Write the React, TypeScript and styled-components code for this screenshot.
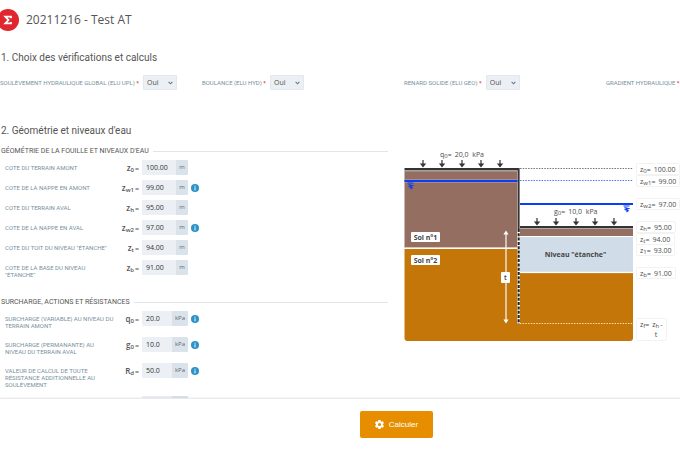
import React from "react";
import styled, { createGlobalStyle } from "styled-components";

const heading = `"Roboto", "Open Sans", sans-serif`;
const caps = `"Roboto", "Open Sans", sans-serif`;
const body = `"Open Sans", "Noto Sans", sans-serif`;

const Global = createGlobalStyle`
  * { box-sizing: border-box; }
  body { margin: 0; background: #fff; color: #555; font-family: ${body}; font-size: 7px; overflow: hidden; }
`;

const Page = styled.div`
  display: flex;
  flex-direction: column;
  height: 100vh;
  min-width: 792px;
`;

const Content = styled.main`
  flex: 1;
  min-height: 0;
  overflow: hidden;
  padding-top: 8px;
`;

const TitleBar = styled.header`
  display: flex;
  align-items: center;
  gap: 7px;
  height: 24px;
`;

const Logo = styled.svg`
  display: block;
  width: 19px;
  height: 24px;
`;

const Title = styled.h1`
  margin: 0;
  font: 400 12px/24px ${body};
`;

const SectionTitle = styled.h2`
  margin: 0;
  padding-left: 1px;
  font: 400 10px/16px ${heading};
`;

const Checks = styled.section`
  padding-top: 18px;
`;

const CheckGrid = styled.div`
  display: grid;
  grid-template-columns: repeat(4, 1fr);
  gap: 16px;
  padding: 9px 0 33px;
`;

const Check = styled.div`
  display: flex;
  align-items: center;
  gap: 4px;
  white-space: nowrap;
`;

const labelText = `
  color: #78909c;
  font-family: ${caps};
  font-size: 6px;
  line-height: 7px;
  text-transform: uppercase;
`;

const CheckLabel = styled.label`
  ${labelText}
`;

const Required = styled.span`
  color: #e53935;
  font-weight: 700;
`;

const SelectBox = styled.div`
  display: grid;
  width: 34px;
  height: 15px;
  border: 1px solid #e1e8ef;
  border-radius: 1px;
  background: #ecf0f5;
`;

const Select = styled.select`
  grid-area: 1 / 1;
  appearance: none;
  border: 0;
  padding: 0 3px;
  background: none;
  color: #4c4c4c;
  font: 400 7px/13px ${body};
`;

const Chevron = styled.svg`
  grid-area: 1 / 1;
  place-self: center end;
  width: 5px;
  height: 4px;
  margin-right: 3px;
  pointer-events: none;
`;

const Geometry = styled.div`
  display: grid;
  grid-template-columns: 1fr 1fr;
  gap: 16px;
  padding-top: 6px;
`;

const Forms = styled.div`
  display: flex;
  flex-direction: column;
  gap: 18px;
`;

const Group = styled.fieldset`
  margin: 0;
  border: 0;
  padding: 0;
  min-width: 0;
`;

const Legend = styled.legend`
  display: flex;
  align-items: center;
  gap: 4px;
  width: 100%;
  padding: 0 0 2px 1px;
  font-family: ${caps};
  font-size: 7px;
  line-height: 13px;
  text-transform: uppercase;

  &::after {
    content: "";
    flex: 1;
    height: 1px;
    background: #e1e5e9;
  }
`;

const Rows = styled.div<{ $gap: number }>`
  display: flex;
  flex-direction: column;
  gap: ${(p) => p.$gap}px;
  padding-left: 5px;
`;

const Row = styled.div`
  display: flex;
  align-items: flex-start;
`;

const RowLabel = styled.label`
  ${labelText}
  width: 110px;
  padding-top: 4px;
`;

const Symbol = styled.span`
  width: 24px;
  height: 15px;
  margin-right: 3px;
  text-align: right;
  font-size: 8px;
  font-weight: 600;
  line-height: 15px;
  white-space: nowrap;

  sub {
    font-size: 6px;
    line-height: 1;
    vertical-align: -1px;
  }
`;

const Equals = styled.span`
  margin-left: 1px;
  font-size: 7px;
`;

const Field = styled.div`
  display: flex;
  width: 46px;
  height: 15px;
  border-radius: 1px;
  overflow: hidden;
`;

const Input = styled.input`
  flex: 1;
  min-width: 0;
  border: 0;
  padding: 0 4px;
  background: #ecf0f5;
  color: #333;
  font: 400 7px/15px ${body};
`;

const Unit = styled.span<{ $wide: boolean }>`
  width: ${(p) => (p.$wide ? 16 : 12)}px;
  background: #dae3ec;
  color: #666;
  font-size: 6px;
  line-height: 15px;
  text-align: center;
`;

const InfoButton = styled.button`
  display: grid;
  place-items: center;
  width: 8px;
  height: 15px;
  margin-left: 3px;
  border: 0;
  padding: 0;
  background: none;
`;

const Diagram = styled.svg`
  display: block;
  width: 276px;
  height: 200px;
  font-family: ${body};
  font-size: 7px;
`;

const Footer = styled.footer`
  display: flex;
  justify-content: center;
  padding: 12px 0;
  border-top: 1px solid #e9e9e9;
  box-shadow: 0 -1px 2px #0000000c;
  background: #fff;
  z-index: 1;
`;

const Submit = styled.button`
  display: flex;
  align-items: center;
  justify-content: center;
  gap: 4px;
  width: 73px;
  height: 27px;
  border: 0;
  border-radius: 2px;
  padding: 0;
  background: #e68e00;
  color: #fff;
  font: 400 8px/12px "Liberation Sans", Arial, sans-serif;
`;

const checks = [
  { id: "upl", label: "Soulèvement hydraulique global (ELU UPL)" },
  { id: "hyd", label: "Boulance (ELU HYD)" },
  { id: "geo", label: "Renard solide (ELU GEO)" },
  { id: "gradient", label: "Gradient hydraulique" },
];

type Item = { label: string; symbol: string; sub: string; value: string; info?: boolean };

const levels: Item[] = [
  { label: "Cote du terrain amont", symbol: "z", sub: "0", value: "100.00" },
  { label: "Cote de la nappe en amont", symbol: "z", sub: "w1", value: "99.00", info: true },
  { label: "Cote du terrain aval", symbol: "z", sub: "h", value: "95.00" },
  { label: "Cote de la nappe en aval", symbol: "z", sub: "w2", value: "97.00", info: true },
  { label: 'Cote du toit du niveau "étanche"', symbol: "z", sub: "t", value: "94.00" },
  { label: 'Cote de la base du niveau "étanche"', symbol: "z", sub: "b", value: "91.00" },
];

const loads: Item[] = [
  { label: "Surcharge (variable) au niveau du terrain amont", symbol: "q", sub: "0", value: "20.0", info: true },
  { label: "Surcharge (permanante) au niveau du terrain aval", symbol: "g", sub: "0", value: "10.0", info: true },
  { label: "Valeur de calcul de toute résistance additionnelle au soulèvement", symbol: "R", sub: "d", value: "50.0", info: true },
  { label: "", symbol: "", sub: "", value: "" },
];

function FormGroup({ title, items, unit, gap }: { title: string; items: Item[]; unit: string; gap: number }) {
  return (
    <Group>
      <Legend>{title}</Legend>
      <Rows $gap={gap}>
        {items.map((item, i) => {
          const id = `${unit}-${i}`;
          return (
            <Row key={id}>
              <RowLabel htmlFor={id}>{item.label}</RowLabel>
              <Symbol>
                {item.symbol && (
                  <>
                    {item.symbol}
                    <sub>{item.sub}</sub>
                    <Equals>=</Equals>
                  </>
                )}
              </Symbol>
              <Field>
                <Input id={id} defaultValue={item.value} />
                <Unit $wide={unit === "kPa"}>{item.symbol && unit}</Unit>
              </Field>
              {item.info && (
                <InfoButton type="button" aria-label="Information">
                  <svg width="8" height="8" viewBox="0 0 8 8">
                    <circle cx="4" cy="4" r="4" fill="#2b93c7" />
                    <path d="M4 1.7v1M4 3.4v2.9" stroke="#fff" strokeWidth="1" />
                  </svg>
                </InfoButton>
              )}
            </Row>
          );
        })}
      </Rows>
    </Group>
  );
}

function DownArrow({ x, y }: { x: number; y: number }) {
  return <path d={`M${x} ${y}v5M${x - 2} ${y + 4}l2 2.5l2 -2.5z`} fill="#333" stroke="#333" strokeWidth="1.2" />;
}

function Water({ x, y }: { x: number; y: number }) {
  return <path d={`M${x - 3} ${y + 1}h6M${x - 2} ${y + 2.6}l4 1l-3 1.2l2.6 .9l-1.6 1.3`} fill="none" stroke="#0b3df5" strokeWidth="1.2" />;
}

function Quantity({ x, y, name, sub, value }: { x: number; y: number; name: string; sub: string; value: string }) {
  return (
    <text x={x} y={y} fill="#4c4c4c">
      {name}
      <tspan dy="1" fontSize="6">{sub}</tspan>
      <tspan dy="-1">=</tspan>
      <tspan dx="3">{value}</tspan>
    </text>
  );
}

const marks = [
  { y: 169, sub: "0", value: "100.00", width: 43 },
  { y: 181, sub: "w1", value: "99.00", width: 43 },
  { y: 204, sub: "w2", value: "97.00", width: 43 },
  { y: 227, sub: "h", value: "95.00", width: 39 },
  { y: 239, sub: "t", value: "94.00", width: 38 },
  { y: 250, sub: "1", value: "93.00", width: 38 },
  { y: 273, sub: "b", value: "91.00", width: 39 },
];

function Excavation() {
  return (
    <Diagram viewBox="404 145 276 200" role="img" aria-label="Coupe de la fouille">
      <Quantity x={440} y={157} name="q" sub="0" value={"20,0\u00a0\u00a0kPa"} />
      {[423, 442, 462, 481, 500].map((x) => <DownArrow key={x} x={x} y={160} />)}
      <rect x="404.5" y="171" width="113" height="77" fill="#956e62" />
      <path d="M404.5 249h114v92h-111a3 3 0 0 1 -3 -3z" fill="#c57608" />
      <rect x="404.5" y="168" width="114" height="2.5" fill="#333" />
      <rect x="404.5" y="170.5" width="113" height="1" fill="#aaa" />
      <rect x="404.5" y="247.4" width="113" height="1.3" fill="#fff" />
      <path d="M404.5 181h113" stroke="#b9a9b4" strokeWidth="3" />
      <path d="M404.5 181h113" stroke="#0b3df5" strokeWidth="2" />
      <Water x={410.5} y={182} />

      <path d="M520 168.5h113" stroke="#777" strokeDasharray="1.5 1.2" />
      <path d="M520 180.5h113" stroke="#5577f5" strokeDasharray="1.5 1.2" />
      <path d="M520 204h113" stroke="#0b3df5" strokeWidth="2" />
      <Water x={626.5} y={205} />
      <Quantity x={554} y={214} name="g" sub="0" value={"10,0\u00a0\u00a0kPa"} />
      {[537, 556, 576, 595, 614].map((x) => <DownArrow key={x} x={x} y={218} />)}
      <rect x="520" y="228" width="113" height="9" fill="#956e62" />
      <rect x="520" y="226" width="113" height="2" fill="#333" />
      <rect x="520" y="228" width="113" height="1" fill="#aaa" />
      <rect x="520" y="237" width="113" height="35" fill="#d0dce7" />
      <rect x="520" y="236" width="113" height="1" fill="#fff" />
      <path d="M517 272.8h116v65.2a3 3 0 0 1 -3 3h-113z" fill="#c57608" />
      <rect x="520" y="271.8" width="113" height="1.3" fill="#fff" />
      <path d="M520 323.5h113" stroke="#f3dcae" strokeDasharray="1.5 1.2" />

      <path d="M518.7 229v95" stroke="#fff" strokeWidth="2.6" />
      <path d="M518.7 229v95" stroke="#222" strokeWidth="2" strokeDasharray="3 1.3" />
      <path d="M518.7 168v62" stroke="#333" strokeWidth="1.8" />

      <path d="M506 233v88" stroke="#f5efe9" strokeWidth="1.3" />
      <path d="M506 230.5l2.6 4h-5.2zM506 323.5l2.6 -4h-5.2z" fill="#fff" />
      <rect x="501" y="272" width="9" height="11" rx="1" fill="#fff" />
      <text x="505.5" y="280" textAnchor="middle" fontWeight="600" fill="#444">t</text>
      <rect x="411" y="232" width="29" height="10" rx="1" fill="#fff" />
      <text x="425.5" y="239.5" textAnchor="middle" fontWeight="700" fill="#444">Sol n°1</text>
      <rect x="411" y="255" width="29" height="10" rx="1" fill="#fff" />
      <text x="425.5" y="262.5" textAnchor="middle" fontWeight="700" fill="#444">Sol n°2</text>
      <text x="575.5" y="257" textAnchor="middle" fontWeight="700" fill="#444">Niveau "étanche"</text>

      {marks.map((m) => (
        <g key={m.sub}>
          <rect x="636.5" y={m.y - 5.5} width={m.width} height="11" rx="1" fill="#fff" stroke="#f2f2f2" />
          <Quantity x={640} y={m.y + 3} name="z" sub={m.sub} value={m.value} />
        </g>
      ))}
      <rect x="636.5" y="318.5" width="30" height="22" rx="1" fill="#fff" stroke="#f2f2f2" />
      <text x="640" y="327" fill="#4c4c4c">
        z<tspan dy="1" fontSize="6">f</tspan>
        <tspan dy="-1">=</tspan>
        <tspan dx="3">z</tspan>
        <tspan dy="1" fontSize="6">h</tspan>
        <tspan dx="1" dy="-1">-</tspan>
      </text>
      <text x="656" y="337" textAnchor="middle" fill="#4c4c4c">t</text>
    </Diagram>
  );
}

export default function App() {
  return (
    <Page>
      <Global />
      <Content>
        <TitleBar>
          <Logo viewBox="0 0 19 24" aria-hidden="true">
            <circle cx="8" cy="12" r="11" fill="#e0262e" />
            <path d="M11 10.2V8.7H5.3L8.5 12.1L5.3 15.4H11V13.9" fill="none" stroke="#fff" strokeWidth="1.8" />
          </Logo>
          <Title>20211216 - Test AT</Title>
        </TitleBar>
        <Checks>
          <SectionTitle>1. Choix des vérifications et calculs</SectionTitle>
          <CheckGrid>
            {checks.map((c) => (
              <Check key={c.id}>
                <CheckLabel htmlFor={c.id}>
                  {c.label} <Required>*</Required>
                </CheckLabel>
                <SelectBox>
                  <Select id={c.id} defaultValue="Oui">
                    <option>Oui</option>
                    <option>Non</option>
                  </Select>
                  <Chevron viewBox="0 0 5 4">
                    <path d="M.6 .8L2.5 2.8L4.4 .8" fill="none" stroke="#607d8b" strokeWidth="1.1" />
                  </Chevron>
                </SelectBox>
              </Check>
            ))}
          </CheckGrid>
        </Checks>
        <SectionTitle>2. Géométrie et niveaux d'eau</SectionTitle>
        <Geometry>
          <Forms>
            <FormGroup title="Géométrie de la fouille et niveaux d'eau" items={levels} unit="m" gap={5} />
            <FormGroup title="Surcharge, actions et résistances" items={loads} unit="kPa" gap={8} />
          </Forms>
          <Excavation />
        </Geometry>
      </Content>
      <Footer>
        <Submit type="button">
          <svg width="11" height="11" viewBox="0 0 24 24" aria-hidden="true">
            <path
              fill="#fff"
              d="M19.4 13c0-.3.1-.6.1-1s0-.7-.1-1l2.1-1.7c.2-.1.2-.4.1-.6l-2-3.5c-.1-.2-.4-.3-.6-.2l-2.5 1c-.5-.4-1.1-.7-1.7-1l-.4-2.6c0-.2-.2-.4-.5-.4h-4c-.2 0-.5.2-.5.4L9 5c-.6.3-1.2.6-1.7 1l-2.5-1c-.2-.1-.5 0-.6.2l-2 3.5c-.1.2-.1.5.1.6L4.5 11c0 .3-.1.6-.1 1s0 .7.1 1l-2.1 1.7c-.2.1-.2.4-.1.6l2 3.5c.1.2.4.3.6.2l2.5-1c.5.4 1.1.7 1.7 1l.4 2.6c0 .2.2.4.5.4h4c.2 0 .5-.2.5-.4l.4-2.6c.6-.3 1.2-.6 1.7-1l2.5 1c.2.1.5 0 .6-.2l2-3.5c.1-.2.1-.5-.1-.6zM12 15.5a3.5 3.5 0 1 1 0-7a3.5 3.5 0 0 1 0 7z"
            />
          </svg>
          Calculer
        </Submit>
      </Footer>
    </Page>
  );
}
